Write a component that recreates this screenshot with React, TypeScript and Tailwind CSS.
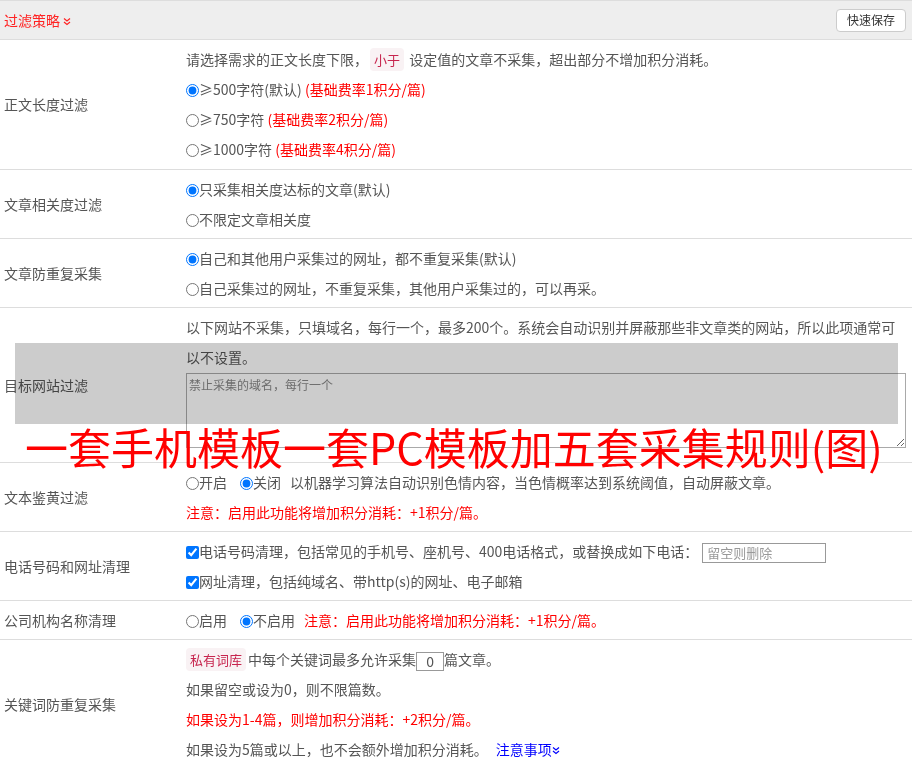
import React from 'react';

const Radio = ({ checked }: { checked?: boolean }) => (
  <input type="radio" defaultChecked={checked} className="w-[13px] h-[13px] align-[-2px]" />
);

const Check = () => (
  <input type="checkbox" defaultChecked className="w-[13px] h-[13px] align-[-2px]" />
);

const Tag = ({ children }: { children: React.ReactNode }) => (
  <span className="rounded bg-[#f9f2f4] px-1 py-0.5 text-[13px] text-[#c7254e]">{children}</span>
);

const Chevrons = ({ color }: { color: string }) => (
  <svg width="8" height="9" viewBox="0 0 8 9" className="inline-block align-[0px]" fill="none" stroke={color} strokeWidth="1.2">
    <path d="M1 1.5 L4 4 L7 1.5" />
    <path d="M1 5 L4 7.5 L7 5" />
  </svg>
);

const Row = ({ label, children, pad = 'py-1' }: { label: string; children: React.ReactNode; pad?: string }) => (
  <div className="flex border-b border-[#ddd]">
    <div className="flex w-[186px] shrink-0 items-center pl-1">{label}</div>
    <div className={`flex-1 pr-1.5 ${pad}`}>{children}</div>
  </div>
);

const Line = ({ children }: { children: React.ReactNode }) => <div className="h-[30px] leading-[30px] whitespace-nowrap">{children}</div>;

const Red = ({ children }: { children: React.ReactNode }) => <span className="text-[#f00]">{children}</span>;

export default function App() {
  return (
    <div
      className="relative min-h-[768px] w-[912px] overflow-hidden bg-white text-[14px] text-[#555]"
      style={{ fontFamily: '"Noto Sans CJK SC", "Noto Sans", sans-serif' }}
    >
      {/* header */}
      <div className="flex h-10 items-center justify-between border-y border-[#ddd] bg-[#eee] pl-1 pr-1.5">
        <div className="text-[#f22]">
          过滤策略 <Chevrons color="#f22" />
        </div>
        <button className="h-[23px] rounded border border-[#ccc] bg-white px-2.5 text-[12px] text-[#333]">快速保存</button>
      </div>

      <Row label="正文长度过滤" pad="pt-1 pb-[5px]">
        <Line>
          请选择需求的正文长度下限，<span className="mx-[2px]"><Tag>小于</Tag></span> 设定值的文章不采集，超出部分不增加积分消耗。
        </Line>
        <Line>
          <Radio checked />≥500字符(默认) <Red>(基础费率1积分/篇)</Red>
        </Line>
        <Line>
          <Radio />≥750字符 <Red>(基础费率2积分/篇)</Red>
        </Line>
        <Line>
          <Radio />≥1000字符 <Red>(基础费率4积分/篇)</Red>
        </Line>
      </Row>

      <Row label="文章相关度过滤">
        <Line>
          <Radio checked />只采集相关度达标的文章(默认)
        </Line>
        <Line>
          <Radio />不限定文章相关度
        </Line>
      </Row>

      <Row label="文章防重复采集">
        <Line>
          <Radio checked />自己和其他用户采集过的网址，都不重复采集(默认)
        </Line>
        <Line>
          <Radio />自己采集过的网址，不重复采集，其他用户采集过的，可以再采。
        </Line>
      </Row>

      <Row label="目标网站过滤">
        <div className="leading-[30px]">
          以下网站不采集，只填域名，每行一个，最多200个。系统会自动识别并屏蔽那些非文章类的网站，所以此项通常可以不设置。
        </div>
        <textarea
          placeholder="禁止采集的域名，每行一个"
          className="mt-px mb-[10px] block h-[75px] w-full border border-[#a9a9a9] bg-white px-0.5 py-0.5 text-[12px] placeholder:text-[#888]"
        />
      </Row>

      <Row label="文本鉴黄过滤">
        <Line>
          <Radio />开启<span className="inline-block w-[13px]" />
          <Radio checked />关闭<span className="inline-block w-[9px]" />以机器学习算法自动识别色情内容，当色情概率达到系统阈值，自动屏蔽文章。
        </Line>
        <Line>
          <Red>注意：启用此功能将增加积分消耗：+1积分/篇。</Red>
        </Line>
      </Row>

      <Row label="电话号码和网址清理">
        <Line>
          <Check />电话号码清理，包括常见的手机号、座机号、400电话格式，或替换成如下电话：
          <input
            placeholder="留空则删除"
            className="ml-[4px] h-[20px] w-[124px] border border-[#999] px-1 align-middle text-[13px] placeholder:text-[#999]"
          />
        </Line>
        <Line>
          <Check />网址清理，包括纯域名、带http(s)的网址、电子邮箱
        </Line>
      </Row>

      <Row label="公司机构名称清理">
        <Line>
          <Radio />启用<span className="inline-block w-[13px]" />
          <Radio checked />不启用<span className="inline-block w-[9px]" />
          <Red>注意：启用此功能将增加积分消耗：+1积分/篇。</Red>
        </Line>
      </Row>

      <Row label="关键词防重复采集">
        <Line>
          <Tag>私有词库</Tag>
          <span className="ml-[2px]">中每个关键词最多允许采集</span>
          <input defaultValue="0" className="h-[19px] w-[28px] border border-[#999] text-center align-middle text-[14px] text-[#555]" />
          篇文章。
        </Line>
        <Line>如果留空或设为0，则不限篇数。</Line>
        <Line>
          <Red>如果设为1-4篇，则增加积分消耗：+2积分/篇。</Red>
        </Line>
        <Line>
          如果设为5篇或以上，也不会额外增加积分消耗。
          <span className="ml-2 text-[#00f]">
            注意事项<Chevrons color="#00f" />
          </span>
        </Line>
      </Row>

      {/* watermark overlay */}
      <div className="pointer-events-none absolute left-[15px] top-[343px] h-[81px] w-[883px] bg-[#ccc] mix-blend-multiply" />
      <div className="pointer-events-none absolute left-[25px] top-[420px] whitespace-nowrap text-[43px] leading-[52px] text-[#f00]">
        一套手机模板一套PC模板加五套采集规则(图)
      </div>
    </div>
  );
}
